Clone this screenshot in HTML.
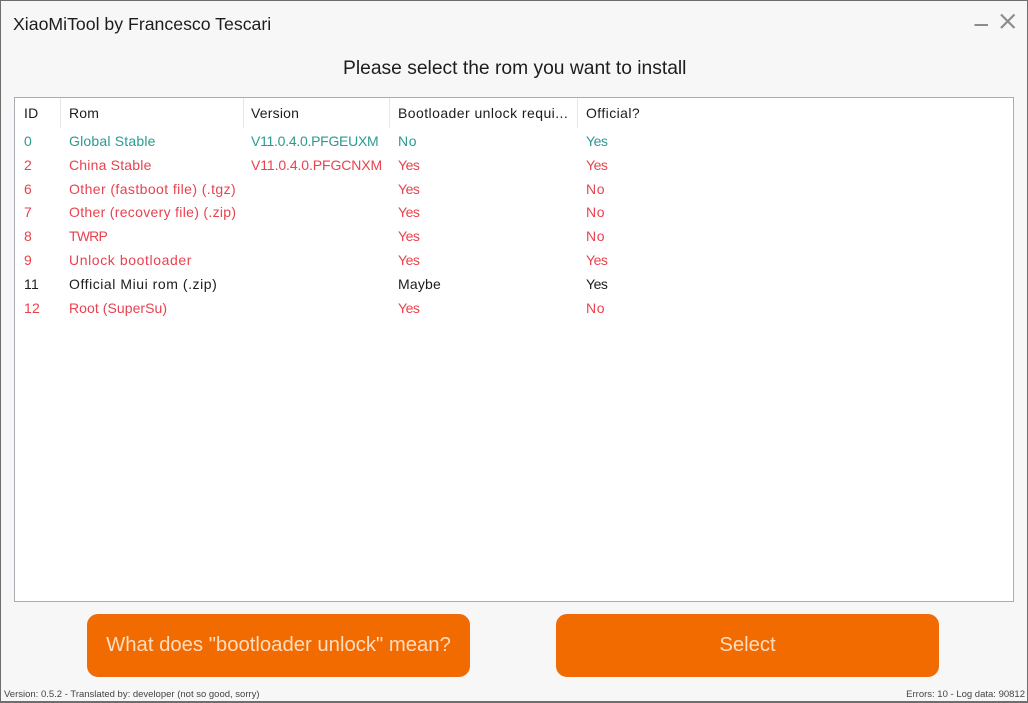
<!DOCTYPE html>
<html><head><meta charset="utf-8"><style>
html,body{margin:0;padding:0;width:1028px;height:703px;overflow:hidden;background:#f7f7f7}
body{position:relative;font-family:"Liberation Sans",sans-serif}
#wrap{position:absolute;left:0;top:0;width:1028px;height:703px;filter:blur(.3px)}
#frame{position:absolute;left:0;top:0;width:1026px;border:1px solid #6e6e6e;border-bottom-width:2px;height:700px}
.a{position:absolute;white-space:nowrap}
#list{position:absolute;left:14px;top:97px;width:998px;height:503px;background:#fff;border:1px solid #a9acb2}
.t{position:absolute;white-space:nowrap;font-size:14px;line-height:18px;letter-spacing:.2px}
.s{position:absolute;top:98px;width:1px;height:30px;background:#e6e6e6}
.g{color:#2a9a92}.r{color:#e8424f}.k{color:#1c1c1c}
.y{letter-spacing:-.47px}.n{letter-spacing:.7px}
.btn{position:absolute;top:614px;height:61px;background:#f26b00;border:1px solid #ee6a0e;border-radius:11px;color:#fddcc0;font-size:20.3px;line-height:60px;text-align:center}
.st{position:absolute;font-size:9.5px;line-height:12px;color:#444;white-space:nowrap;top:689px}
</style></head><body><div id="wrap">
<div id="frame"></div>
<div class="a" style="left:13px;top:14px;font-size:17.7px;line-height:20px;color:#1d1d1d">XiaoMiTool by Francesco Tescari</div>
<svg class="a" style="left:970px;top:10px" width="50" height="22" viewBox="0 0 50 22"><path d="M4.500 15H18" stroke="#8c8c8c" stroke-width="2" fill="none"/><path d="M31 4.500L44.500 18M44.500 4.500L31 18" stroke="#8c8c8c" stroke-width="2.2" fill="none"/></svg>
<div class="a" style="left:343px;top:57px;font-size:19.25px;line-height:24px;color:#1d1d1d">Please select the rom you want to install</div>
<div id="list"></div>
<div class="s" style="left:60px"></div><div class="s" style="left:243px"></div><div class="s" style="left:389px"></div><div class="s" style="left:577px"></div>
<div class="t k" style="left:24px;top:104px">ID</div><div class="t k" style="left:69px;top:104px">Rom</div><div class="t k" style="left:251px;top:104px">Version</div><div class="t k" style="left:398px;top:104px;letter-spacing:.44px">Bootloader unlock requi...</div><div class="t k" style="left:586px;top:104px;letter-spacing:.42px">Official?</div>

<div class="t g" style="left:24px;top:132px">0</div><div class="t g" style="left:69px;top:132px">Global Stable</div><div class="t g" style="left:251px;top:132px;letter-spacing:-.27px">V11.0.4.0.PFGEUXM</div><div class="t g n" style="left:398px;top:132px">No</div><div class="t g y" style="left:586px;top:132px">Yes</div>
<div class="t r" style="left:24px;top:156px">2</div><div class="t r" style="left:69px;top:156px">China Stable</div><div class="t r" style="left:251px;top:156px;letter-spacing:-.1px">V11.0.4.0.PFGCNXM</div><div class="t r y" style="left:398px;top:156px">Yes</div><div class="t r y" style="left:586px;top:156px">Yes</div>
<div class="t r" style="left:24px;top:180px">6</div><div class="t r" style="left:69px;top:180px;letter-spacing:.41px">Other (fastboot file) (.tgz)</div><div class="t r y" style="left:398px;top:180px">Yes</div><div class="t r n" style="left:586px;top:180px">No</div>
<div class="t r" style="left:24px;top:203px">7</div><div class="t r" style="left:69px;top:203px;letter-spacing:.31px">Other (recovery file) (.zip)</div><div class="t r y" style="left:398px;top:203px">Yes</div><div class="t r n" style="left:586px;top:203px">No</div>
<div class="t r" style="left:24px;top:227px">8</div><div class="t r" style="left:69px;top:227px;letter-spacing:-.8px">TWRP</div><div class="t r y" style="left:398px;top:227px">Yes</div><div class="t r n" style="left:586px;top:227px">No</div>
<div class="t r" style="left:24px;top:251px">9</div><div class="t r" style="left:69px;top:251px;letter-spacing:.6px">Unlock bootloader</div><div class="t r y" style="left:398px;top:251px">Yes</div><div class="t r y" style="left:586px;top:251px">Yes</div>
<div class="t k" style="left:24px;top:275px">11</div><div class="t k" style="left:69px;top:275px;letter-spacing:.55px">Official Miui rom (.zip)</div><div class="t k" style="left:398px;top:275px">Maybe</div><div class="t k y" style="left:586px;top:275px">Yes</div>
<div class="t r" style="left:24px;top:299px">12</div><div class="t r" style="left:69px;top:299px;letter-spacing:.06px">Root (SuperSu)</div><div class="t r y" style="left:398px;top:299px">Yes</div><div class="t r n" style="left:586px;top:299px">No</div>

<div class="btn" style="left:87px;width:381px">What does "bootloader unlock" mean?</div>
<div class="btn" style="left:556px;width:381px">Select</div>
<div class="st" style="left:4px">Version: 0.5.2 - Translated by: developer (not so good, sorry)</div>
<div class="st" style="right:3px">Errors: 10 - Log data: 90812</div>
</div></body></html>
